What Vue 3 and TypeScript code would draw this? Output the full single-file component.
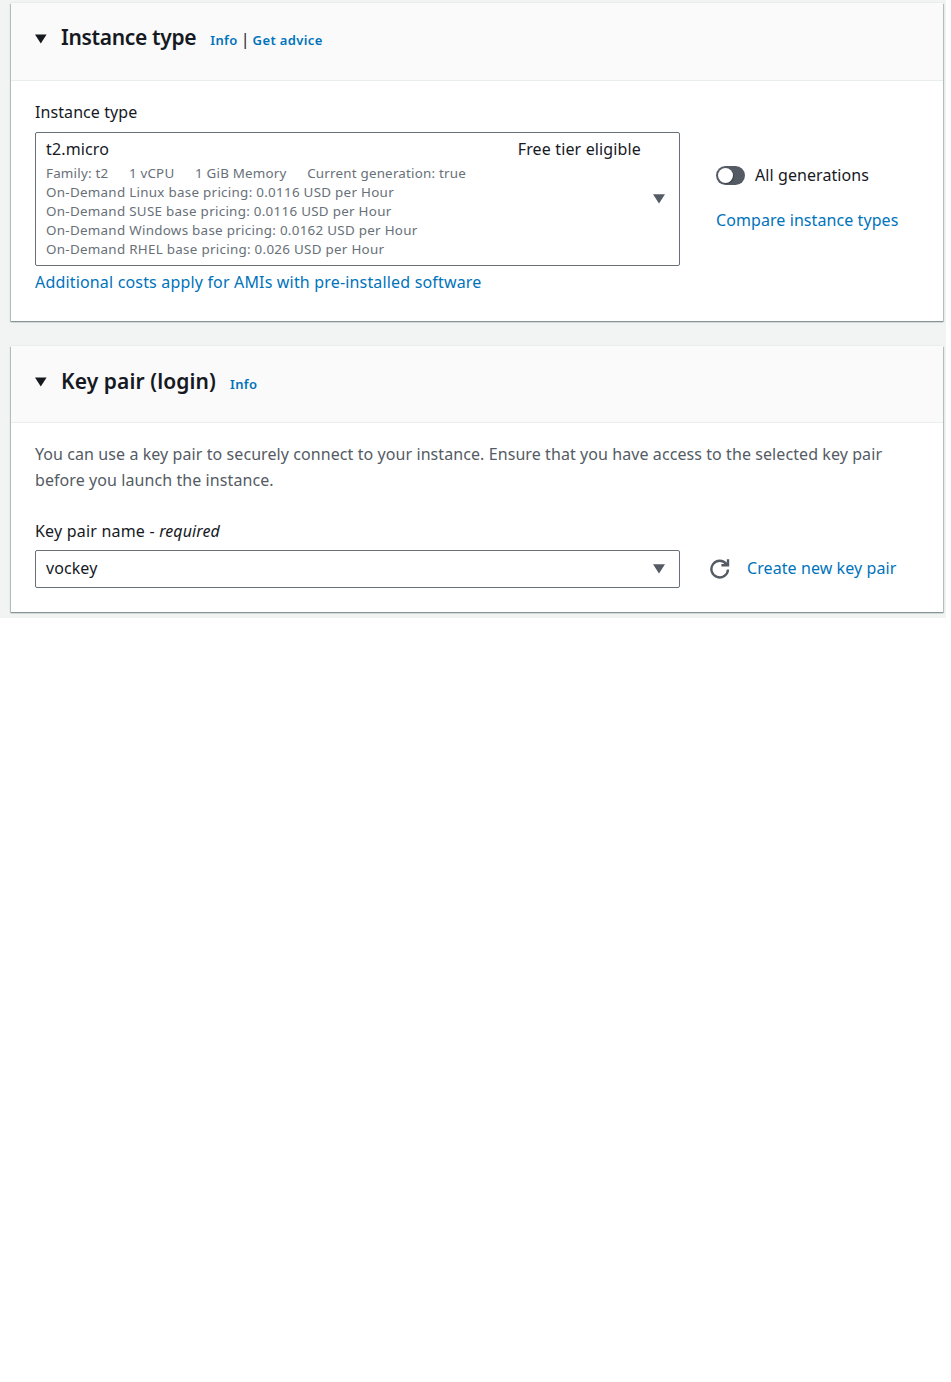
<script setup lang="ts">
const pricing = [
  'On-Demand Linux base pricing: 0.0116 USD per Hour',
  'On-Demand SUSE base pricing: 0.0116 USD per Hour',
  'On-Demand Windows base pricing: 0.0162 USD per Hour',
  'On-Demand RHEL base pricing: 0.026 USD per Hour',
]
const specs = ['Family: t2', '1 vCPU', '1 GiB Memory', 'Current generation: true']
</script>

<template>
  <main class="page">
    <section class="card card-type">
      <header class="head">
        <svg class="caret" viewBox="0 0 12 10"><path d="M0 .5h11.6L5.8 9.6z" /></svg>
        <h2>Instance type</h2>
        <a class="info">Info</a><span class="bar">|</span><a class="info">Get advice</a>
      </header>
      <div class="body">
        <label class="label">Instance type</label>
        <div class="row">
          <div class="select big">
            <div class="option">
              <div class="top"><span>t2.micro</span><span>Free tier eligible</span></div>
              <div class="specs"><span v-for="s in specs" :key="s">{{ s }}</span></div>
              <div v-for="p in pricing" :key="p" class="price">{{ p }}</div>
            </div>
            <svg class="caret grey" viewBox="0 0 12 10"><path d="M0 .2h12L6 9.6z" /></svg>
          </div>
          <div class="side">
            <div class="toggle-row"><span class="toggle"><i></i></span><span>All generations</span></div>
            <a class="compare">Compare instance types</a>
          </div>
        </div>
        <div class="costs"><a>Additional costs apply for AMIs with pre-installed software</a></div>
      </div>
    </section>
    <section class="card card-key">
      <header class="head">
        <svg class="caret" viewBox="0 0 12 10"><path d="M0 .5h11.6L5.8 9.6z" /></svg>
        <h2>Key pair (login)</h2>
        <a class="info">Info</a>
      </header>
      <div class="body">
        <p class="desc">You can use a key pair to securely connect to your instance. Ensure that you have access to the selected key pair<br>before you launch the instance.</p>
        <label class="label"><span class="name">Key pair name - </span><em>required</em></label>
        <div class="row">
          <div class="select small"><span class="value">vockey</span>
            <svg class="caret grey" viewBox="0 0 12 10"><path d="M0 .2h12L6 9.6z" /></svg>
          </div>
          <svg class="refresh" viewBox="0 0 20 20"><path d="M18 10.5A8.3 8.3 0 1 1 16.4 5.2M11.4 6.3H18V.2M14.6 4.8h2.6" /></svg>
          <a class="create">Create new key pair</a>
        </div>
      </div>
    </section>
  </main>
</template>

<style>
body { margin: 0; background: #fff; }
</style>
<style scoped>
.page { box-sizing: border-box; width: 946px; height: 618px; padding: 3px 3px 0 11px; background: #f2f3f3; font: 16px/24px "Noto Sans", sans-serif; letter-spacing: 0.08px; color: #16191f; overflow: hidden; }
.card { box-sizing: border-box; background: #fff; box-shadow: 0 1px 1px #879596, 1px 1px 1px #bcc6c7, -1px 1px 1px #bcc6c7, 0 -1px 1px #eaeded; }
.card-type { height: 318px; margin-bottom: 25px; }
.card-key { height: 266px; }
.head { box-sizing: border-box; display: flex; height: 78px; padding: 20px 24px 0; background: #fafafa; border-bottom: 1px solid #eaeded; line-height: 30px; }
.card-key .head { height: 77px; }
h2 { margin: -1px 14px 0 14px; font-size: 21px; line-height: 30px; font-weight: 600; letter-spacing: -0.33px; }
.card-key h2 { margin-top: 0; letter-spacing: 0.1px; }
.caret { width: 12px; height: 10px; fill: #16191f; flex: none; }
.head .caret { margin-top: 11px; }
.grey { fill: #545b64; }
a { color: #0073bb; }
.info { font-size: 13px; font-weight: 600; line-height: 34px; letter-spacing: 0.38px; }
.card-key .info { line-height: 36px; }
.bar { margin: 0 3px; line-height: 32px; }
.body { padding: 0 24px; }
.label { display: block; padding-top: 19px; height: 32px; }
.row { display: flex; }
.select { box-sizing: border-box; width: 645px; border: 1px solid #687078; border-radius: 2px; display: flex; align-items: center; justify-content: space-between; padding: 0 14px 0 10px; flex: none; }
.big { height: 134px; }
.small { height: 38px; }
.value { padding-bottom: 2px; }
.option { width: 595px; align-self: flex-start; padding-top: 4px; }
.top { display: flex; justify-content: space-between; margin-bottom: 3px; letter-spacing: 0.14px; }
.specs { display: flex; gap: 20.6px; }
.specs, .price { font-size: 13.4px; line-height: 19.1px; letter-spacing: 0.28px; color: #687078; }
.specs { letter-spacing: 0.2px; }
.side { padding: 31px 0 0 36px; }
.toggle-row { display: flex; align-items: center; gap: 10px; margin-bottom: 21px; }
.toggle { width: 29px; height: 19px; border-radius: 10px; background: #545b64; display: flex; align-items: center; box-sizing: border-box; padding-left: 2px; }
.toggle i { width: 15px; height: 15px; border-radius: 50%; background: #fff; box-shadow: 1px 1px 1px rgba(0, 0, 0, 0.25); }
.costs { padding-top: 4px; letter-spacing: 0.17px; }
.desc { margin: 0; padding-top: 18px; color: #545b64; line-height: 26px; white-space: nowrap; }
.card-key .label { padding-top: 26px; height: 31px; white-space: pre; }
.name { letter-spacing: 0.2px; }
.refresh { width: 20px; height: 20px; margin: 9px 17px 0 30px; fill: none; stroke: #545b64; stroke-width: 2.4; }
.create { line-height: 36px; }
</style>
